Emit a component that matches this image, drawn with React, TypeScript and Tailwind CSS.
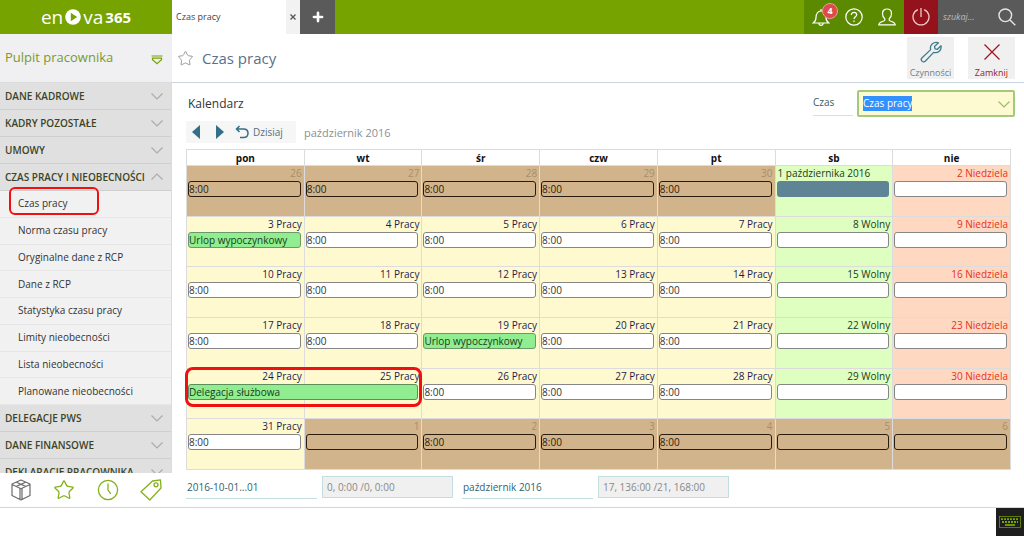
import { Plus, Star } from "lucide-react";

type Day = {
  label: string;
  kind: "other" | "work" | "free" | "sunday";
  text?: string;
  bar?: "leave" | "trip" | "covered" | "selected";
};

const weekDays = ["pon", "wt", "śr", "czw", "pt", "sb", "nie"];

const weeks: Day[][] = [
  [
    { label: "26", kind: "other", text: "8:00" },
    { label: "27", kind: "other", text: "8:00" },
    { label: "28", kind: "other", text: "8:00" },
    { label: "29", kind: "other", text: "8:00" },
    { label: "30", kind: "other", text: "8:00" },
    { label: "1 października 2016", kind: "free", bar: "selected" },
    { label: "2 Niedziela", kind: "sunday" },
  ],
  [
    { label: "3 Pracy", kind: "work", text: "Urlop wypoczynkowy", bar: "leave" },
    { label: "4 Pracy", kind: "work", text: "8:00" },
    { label: "5 Pracy", kind: "work", text: "8:00" },
    { label: "6 Pracy", kind: "work", text: "8:00" },
    { label: "7 Pracy", kind: "work", text: "8:00" },
    { label: "8 Wolny", kind: "free" },
    { label: "9 Niedziela", kind: "sunday" },
  ],
  [
    { label: "10 Pracy", kind: "work", text: "8:00" },
    { label: "11 Pracy", kind: "work", text: "8:00" },
    { label: "12 Pracy", kind: "work", text: "8:00" },
    { label: "13 Pracy", kind: "work", text: "8:00" },
    { label: "14 Pracy", kind: "work", text: "8:00" },
    { label: "15 Wolny", kind: "free" },
    { label: "16 Niedziela", kind: "sunday" },
  ],
  [
    { label: "17 Pracy", kind: "work", text: "8:00" },
    { label: "18 Pracy", kind: "work", text: "8:00" },
    { label: "19 Pracy", kind: "work", text: "Urlop wypoczynkowy", bar: "leave" },
    { label: "20 Pracy", kind: "work", text: "8:00" },
    { label: "21 Pracy", kind: "work", text: "8:00" },
    { label: "22 Wolny", kind: "free" },
    { label: "23 Niedziela", kind: "sunday" },
  ],
  [
    { label: "24 Pracy", kind: "work", text: "Delegacja służbowa", bar: "trip" },
    { label: "25 Pracy", kind: "work", bar: "covered" },
    { label: "26 Pracy", kind: "work", text: "8:00" },
    { label: "27 Pracy", kind: "work", text: "8:00" },
    { label: "28 Pracy", kind: "work", text: "8:00" },
    { label: "29 Wolny", kind: "free" },
    { label: "30 Niedziela", kind: "sunday" },
  ],
  [
    { label: "31 Pracy", kind: "work", text: "8:00" },
    { label: "1", kind: "other" },
    { label: "2", kind: "other", text: "8:00" },
    { label: "3", kind: "other", text: "8:00" },
    { label: "4", kind: "other", text: "8:00" },
    { label: "5", kind: "other" },
    { label: "6", kind: "other" },
  ],
];

const cellStyles = {
  other: "bg-[#d2b48c] text-[#a88d6c]",
  work: "bg-[#fff9d0] text-[#1c1c50]",
  free: "bg-[#dfffc0] text-[#223a22]",
  sunday: "bg-[#ffd8c2] text-[#e8301c]",
};

const sections = ["DANE KADROWE", "KADRY POZOSTAŁE", "UMOWY"];
const lowerSections = ["DELEGACJE PWS", "DANE FINANSOWE", "DEKLARACJE PRACOWNIKA"];

const items = [
  "Czas pracy",
  "Norma czasu pracy",
  "Oryginalne dane z RCP",
  "Dane z RCP",
  "Statystyka czasu pracy",
  "Limity nieobecności",
  "Lista nieobecności",
  "Planowane nieobecności",
];

function Chevron({ up = false, className }: { up?: boolean; className: string }) {
  return (
    <svg viewBox="0 0 12 8" className={`h-2 w-3 shrink-0 ${className}`} fill="none" stroke="currentColor" strokeWidth="1.2">
      <path d={up ? "M.5 6.500L6 1l5.500 5.500" : "M.5 1.500L6 7l5.500-5.500"} />
    </svg>
  );
}

function SectionButton({ title, open = false }: { title: string; open?: boolean }) {
  return (
    <button className="flex h-[27px] w-full shrink-0 items-center justify-between border-b border-[#cfcfcf] bg-[#e0e0e0] pr-2 pl-[5px] text-[10px] font-semibold whitespace-nowrap text-[#3c4426]">
      {title}
      <Chevron up={open} className="text-[#ababab]" />
    </button>
  );
}

function Logo() {
  return (
    <div className="flex w-[172px] items-center justify-center gap-[2px] text-white">
      <span className="text-[19px] leading-none">en</span>
      <svg viewBox="0 0 16 16" className="size-4">
        <circle cx="8" cy="8" r="7.8" fill="#fff" />
        <path d="M5.800 3.800v8.400l6.400-4.200z" fill="#76a300" />
      </svg>
      <span className="text-[19px] leading-none">va</span>
      <span className="text-[15px] leading-none font-bold">365</span>
    </div>
  );
}

function TopBar() {
  return (
    <header className="flex h-[34px] shrink-0 bg-[#76a300]">
      <Logo />
      <div className="flex w-32 items-center justify-between bg-white pl-1 text-[9px] text-[#444]">
        Czas pracy
        <button aria-label="Zamknij kartę" className="flex h-full w-[14px] items-center justify-center bg-[#f2f2f2]">
          <svg viewBox="0 0 6 6" className="size-[6px]" stroke="#555" strokeWidth="1.3">
            <path d="M.5.5l5 5M5.500.5l-5 5" />
          </svg>
        </button>
      </div>
      <button aria-label="Nowa karta" className="flex w-[35px] items-center justify-center bg-[#5a5a5a] text-white">
        <Plus className="size-[14px]" strokeWidth={4.5} />
      </button>

      <div className="ml-auto flex items-center bg-[#5b8a00]">
        <button aria-label="Powiadomienia" className="relative flex w-[34px] justify-center text-white">
          <svg viewBox="0 0 18 20" className="h-5 w-[18px]" fill="none" stroke="currentColor" strokeWidth="1.2">
            <path d="M1.200 16c2-1.300 2.800-2.500 2.800-5.500 0-4 2-6.500 5-6.500s5 2.500 5 6.500c0 3 .8 4.200 2.800 5.500zM7 16.200c0 2.800 4 2.800 4 0M9 4V2" />
          </svg>
          <span className="absolute -top-1 right-0 flex size-[16px] items-center justify-center rounded-full border border-[#f39a94] bg-[#dc4a4a] text-[9px] font-bold">
            4
          </span>
        </button>
        <button aria-label="Pomoc" className="flex w-[32px] justify-center text-white">
          <svg viewBox="0 0 18 18" className="size-[18px]" fill="none" stroke="currentColor" strokeWidth="1.2">
            <circle cx="9" cy="9" r="8.200" />
            <path d="M6.300 7c0-1.600 1.100-2.600 2.700-2.600s2.700 1 2.700 2.400C11.700 8.800 9 8.900 9 11M9 12.400v1.500" />
          </svg>
        </button>
        <button aria-label="Profil" className="flex w-[34px] justify-center text-white">
          <svg viewBox="0 0 18 18" className="size-[18px]" fill="none" stroke="currentColor" strokeWidth="1.2">
            <path d="M6.800 10.800C5 9.500 4.500 7.600 4.500 5.500 4.500 2.700 6.300 1 9 1s4.500 1.700 4.500 4.500c0 2.100-.5 4-2.300 5.300v1.500c0 1 6 1.200 6 4.500H.8c0-3.300 6-3.500 6-4.500z" />
          </svg>
        </button>
        <button aria-label="Wyloguj" className="flex h-full w-[34px] items-center justify-center bg-[#93121c] text-[#f3c9c9]">
          <svg viewBox="0 0 18 18" className="size-[18px]" fill="none" stroke="currentColor" strokeWidth="1.3">
            <path d="M5.800 1.600a8 8 0 1 0 6.400 0M9 0v9" />
          </svg>
        </button>
        <div className="flex h-full w-[86px] items-center bg-[#5a5a5a]">
          <input
            aria-label="Szukaj"
            placeholder="szukaj..."
            className="w-full min-w-0 pl-[5px] text-[9px] italic outline-none placeholder:text-[#bdbdbd]"
          />
          <svg viewBox="0 0 18 18" className="mr-2 size-[18px] shrink-0" fill="none" stroke="#e4e4e4" strokeWidth="1.400">
            <circle cx="7.300" cy="7.300" r="6.300" />
            <path d="M12 12l5.300 5.300" />
          </svg>
        </div>
      </div>
    </header>
  );
}

function Sidebar() {
  return (
    <aside className="flex w-[172px] shrink-0 flex-col">
      <div className="flex h-[49px] shrink-0 items-center justify-between border-b border-[#dcdcdc] bg-[#f0f0f2] pr-[9px] pl-[5px]">
        <span className="text-[13px] text-[#7a9a2e]">Pulpit pracownika</span>
        <svg viewBox="0 0 12 10" className="mt-1 h-[10px] w-3" fill="none" stroke="#76a300" strokeWidth="1.200">
          <path d="M.5 1h11M1.500 3.200h9v1.600L6 8.800 1.500 4.800z" />
        </svg>
      </div>
      <nav className="min-h-0 flex-1 overflow-hidden border-r border-[#dcdcdc]">
        {sections.map((title) => (
          <SectionButton key={title} title={title} />
        ))}
        <SectionButton title="CZAS PRACY I NIEOBECNOŚCI" open />
        <ul className="grid h-[214px] auto-rows-fr bg-[#f1f1f1]">
          {items.map((item, i) => (
            <li key={item} className="relative flex items-center border-b border-[#e6e6e6] pl-[18px]">
              <a href="#" className="text-[10px] text-[#333]">
                {item}
              </a>
              {i === 0 && (
                <span className="absolute -top-1 left-[9px] h-7 w-[90px] rounded-md border-2 border-[#f01010]" />
              )}
            </li>
          ))}
        </ul>
        {lowerSections.map((title) => (
          <SectionButton key={title} title={title} />
        ))}
      </nav>
      <div className="flex h-[34px] shrink-0 items-center justify-between px-[10px]">
        <button aria-label="Moduły">
          <svg viewBox="0 0 22 22" className="size-[22px]" fill="none" stroke="#6c6c6c" strokeWidth="1.200" strokeLinejoin="round">
            <path d="M11 1l9 4v11.500l-9 4.500-9-4.500V5zM2 5.500l8 3.800v11M20 5.500l-8 3.800v11M10 9.300l1 .4 1-.4M6.500 3.200l9 4.200M15.500 3.200l-9 4.200" />
          </svg>
        </button>
        <button aria-label="Ulubione">
          <Star className="size-[22px] text-[#85b01c]" strokeWidth={1.4} />
        </button>
        <button aria-label="Historia">
          <svg viewBox="0 0 22 22" className="size-[22px]" fill="none" stroke="#85b01c" strokeWidth="1.300">
            <circle cx="11" cy="11" r="9.600" />
            <path d="M11 4.500V11l2.800 4" />
          </svg>
        </button>
        <button aria-label="Etykiety">
          <svg viewBox="0 0 22 22" className="size-[22px]" fill="none" stroke="#85b01c" strokeWidth="1.300" strokeLinejoin="round">
            <path d="M12.500 2L20.500 .9 21 9 9.800 21 1 12.800z" />
            <circle cx="16" cy="5.800" r="2" />
          </svg>
        </button>
      </div>
    </aside>
  );
}

function DayBar({ day }: { day: Day }) {
  if (day.bar === "covered") return null;
  if (day.bar === "selected") {
    return <div className="mr-[3px] ml-px h-4 rounded-[3px] bg-[#5f8496]" />;
  }
  if (day.bar === "trip") {
    return (
      <>
        <div className="relative z-10 ml-px h-4 w-[calc(200%-3px)] rounded-[3px] border border-[#5c8f5c] bg-[#90ee90] text-[10px] leading-[14px] text-[#1b3a1b]">
          {day.text}
        </div>
        <span className="absolute -top-[2px] -left-[2px] z-20 h-10 w-[calc(200%+4px)] rounded-lg border-3 border-[#f01010]" />
      </>
    );
  }
  const look =
    day.bar === "leave"
      ? "border-[#6a9a6a] bg-[#90ee90] text-[#1b3a1b]"
      : day.kind === "other"
        ? "border-[#2a1c0c] bg-[#d2b48c] text-[#2a1c0c]"
        : "border-[#868686] bg-white text-[#333]";
  return (
    <div className={`mr-[3px] ml-px h-4 rounded-[3px] border text-[10px] leading-[14px] whitespace-nowrap ${look}`}>
      {day.text}
    </div>
  );
}

function Calendar() {
  return (
    <table className="h-[321px] w-full table-fixed border-collapse border border-[#dcdcdc]">
      <thead>
        <tr className="h-4">
          {weekDays.map((name) => (
            <th key={name} className="border border-[#dcdcdc] p-0 text-[10px] leading-[14px] font-bold text-[#111]">
              {name}
            </th>
          ))}
        </tr>
      </thead>
      <tbody>
        {weeks.map((week, i) => (
          <tr key={i}>
            {week.map((day) => (
              <td key={day.label} className={`border border-[#dcdcdc] p-0 align-top ${cellStyles[day.kind]}`}>
                <div className="relative">
                  <div
                    className={`h-[15px] px-[2px] text-[10px] leading-[15px] ${day.bar === "selected" ? "text-left" : "text-right"}`}
                  >
                    {day.label}
                  </div>
                  <DayBar day={day} />
                </div>
              </td>
            ))}
          </tr>
        ))}
      </tbody>
    </table>
  );
}

function Summary({ id, label, value }: { id: string; label: string; value: string }) {
  return (
    <div className="flex items-start gap-[5px]">
      <label htmlFor={id} className="h-[23px] w-[131px] border-b border-[#c4dde0] pl-px text-[10px] leading-[22px] text-[#2f6470]">
        {label}
      </label>
      <input
        id={id}
        readOnly
        value={value}
        className="h-[22px] w-[131px] border border-[#c4dde0] bg-[#f0f0f0] px-1 text-[10px] text-[#888] outline-none"
      />
    </div>
  );
}

export default function App() {
  return (
    <div className="flex h-screen flex-col bg-white font-['Open_Sans','Noto_Sans',sans-serif]">
      <TopBar />
      <div className="flex min-h-0 flex-1 border-b border-[#cbd8dc]">
        <Sidebar />
        <main className="flex min-w-0 flex-1 flex-col">
          <div className="flex h-[49px] shrink-0 items-center border-b border-[#cbd5e0] pr-[9px] pl-[5px]">
            <button aria-label="Dodaj do ulubionych">
              <Star className="size-[17px] text-[#999]" strokeWidth={1.4} />
            </button>
            <h1 className="ml-2 text-[15px] text-[#5a6f8c]">Czas pracy</h1>
            <button className="ml-auto flex h-[42px] w-[47px] flex-col items-center justify-between bg-[#f0f0f0] pt-1 text-[9px] leading-[13px] text-[#6f7d8c]">
              <svg viewBox="0 0 22 22" className="size-[22px]" fill="none" stroke="#3f7d8c" strokeWidth="1.300" strokeLinejoin="round">
                <path d="M18.500 1.800l-4 3.700.5 2.300 2.400.5L21 4.800c.8 4.700-3 7.800-7.400 6.600L5.500 20c-1.200 1.200-2.600 1-3.500.1-.9-.9-1-2.300.1-3.400l8.600-8.100C9.300 4 13.500.3 18.500 1.800z" />
              </svg>
              Czynności
            </button>
            <button className="ml-[14px] flex h-[42px] w-[47px] flex-col items-center justify-between bg-[#f0f0f0] pt-1 text-[9px] leading-[13px] text-[#a01826]">
              <svg viewBox="0 0 22 22" className="size-[22px]" stroke="#a01826" strokeWidth="1.300">
                <path d="M3.500 3.500l15 15M18.500 3.500l-15 15" />
              </svg>
              Zamknij
            </button>
          </div>

          <div className="flex h-[38px] shrink-0 items-center pt-[3px] pr-[9px] pl-4 text-[#333]">
            <h2 className="text-[12px]">Kalendarz</h2>
            <label htmlFor="view" className="ml-auto h-[24px] w-10 border-b border-[#d5e0e4] text-[10px] leading-[20px] text-[#3c5a68]">
              Czas
            </label>
            <div className="ml-1 flex h-[27px] w-[158px] items-center justify-between rounded-xs border-2 border-[#a3c97c] bg-[#fdf9d0] pr-[3px] pl-1">
              <select id="view" className="appearance-none bg-[#3390ff] text-[10px] leading-[15px] text-white outline-none field-sizing-content">
                <option>Czas pracy</option>
              </select>
              <Chevron className="text-[#9dbb6c]" />
            </div>
          </div>

          {/* Month navigation */}
          <div className="flex h-[28px] shrink-0 items-start pl-[14px]">
            <div className="flex h-[22px] w-[110px] items-center bg-[#f6f6f6] pl-[6px] text-[#336f86]">
              <button aria-label="Poprzedni miesiąc">
                <svg viewBox="0 0 8 14" className="h-[14px] w-2" fill="currentColor">
                  <path d="M8 0v14L0 7z" />
                </svg>
              </button>
              <button aria-label="Następny miesiąc" className="ml-4">
                <svg viewBox="0 0 8 14" className="h-[14px] w-2" fill="currentColor">
                  <path d="M0 0v14l8-7z" />
                </svg>
              </button>
              <button className="ml-[11px] flex items-center gap-1 text-[10px] text-[#55707f]">
                <svg viewBox="0 0 14 14" className="size-[14px]" fill="none" stroke="#336f86" strokeWidth="1.500">
                  <path d="M4.500 1L1.500 4l3 3M1.500 4H8.500c6 0 6 8.500 0 8.500H5" />
                </svg>
                Dzisiaj
              </button>
            </div>
            <span className="ml-2 text-[11px] leading-[24px] text-[#8b8f94]">październik 2016</span>
          </div>

          <div className="pr-[13px] pl-[14px]">
            <Calendar />
            <div className="mt-[6px] flex gap-[9px]">
              <Summary id="day-sum" label="2016-10-01...01" value="0, 0:00 /0, 0:00" />
              <Summary id="month-sum" label="październik 2016" value="17, 136:00 /21, 168:00" />
            </div>
          </div>
        </main>
      </div>
      <footer className="flex h-7 shrink-0 justify-end">
        <button aria-label="Klawiatura" className="flex w-7 items-center justify-center bg-[#1e1e1e]">
          <svg viewBox="0 0 22 12" className="h-3 w-[22px]" fill="none" stroke="#76a300">
            <rect x=".5" y=".5" width="21" height="11" strokeWidth=".7" />
            <path d="M2 3.200h18M3 6h16" strokeWidth="1.800" strokeDasharray="2 1" />
            <path d="M6 9h10" strokeWidth="1.800" />
          </svg>
        </button>
      </footer>
    </div>
  );
}
